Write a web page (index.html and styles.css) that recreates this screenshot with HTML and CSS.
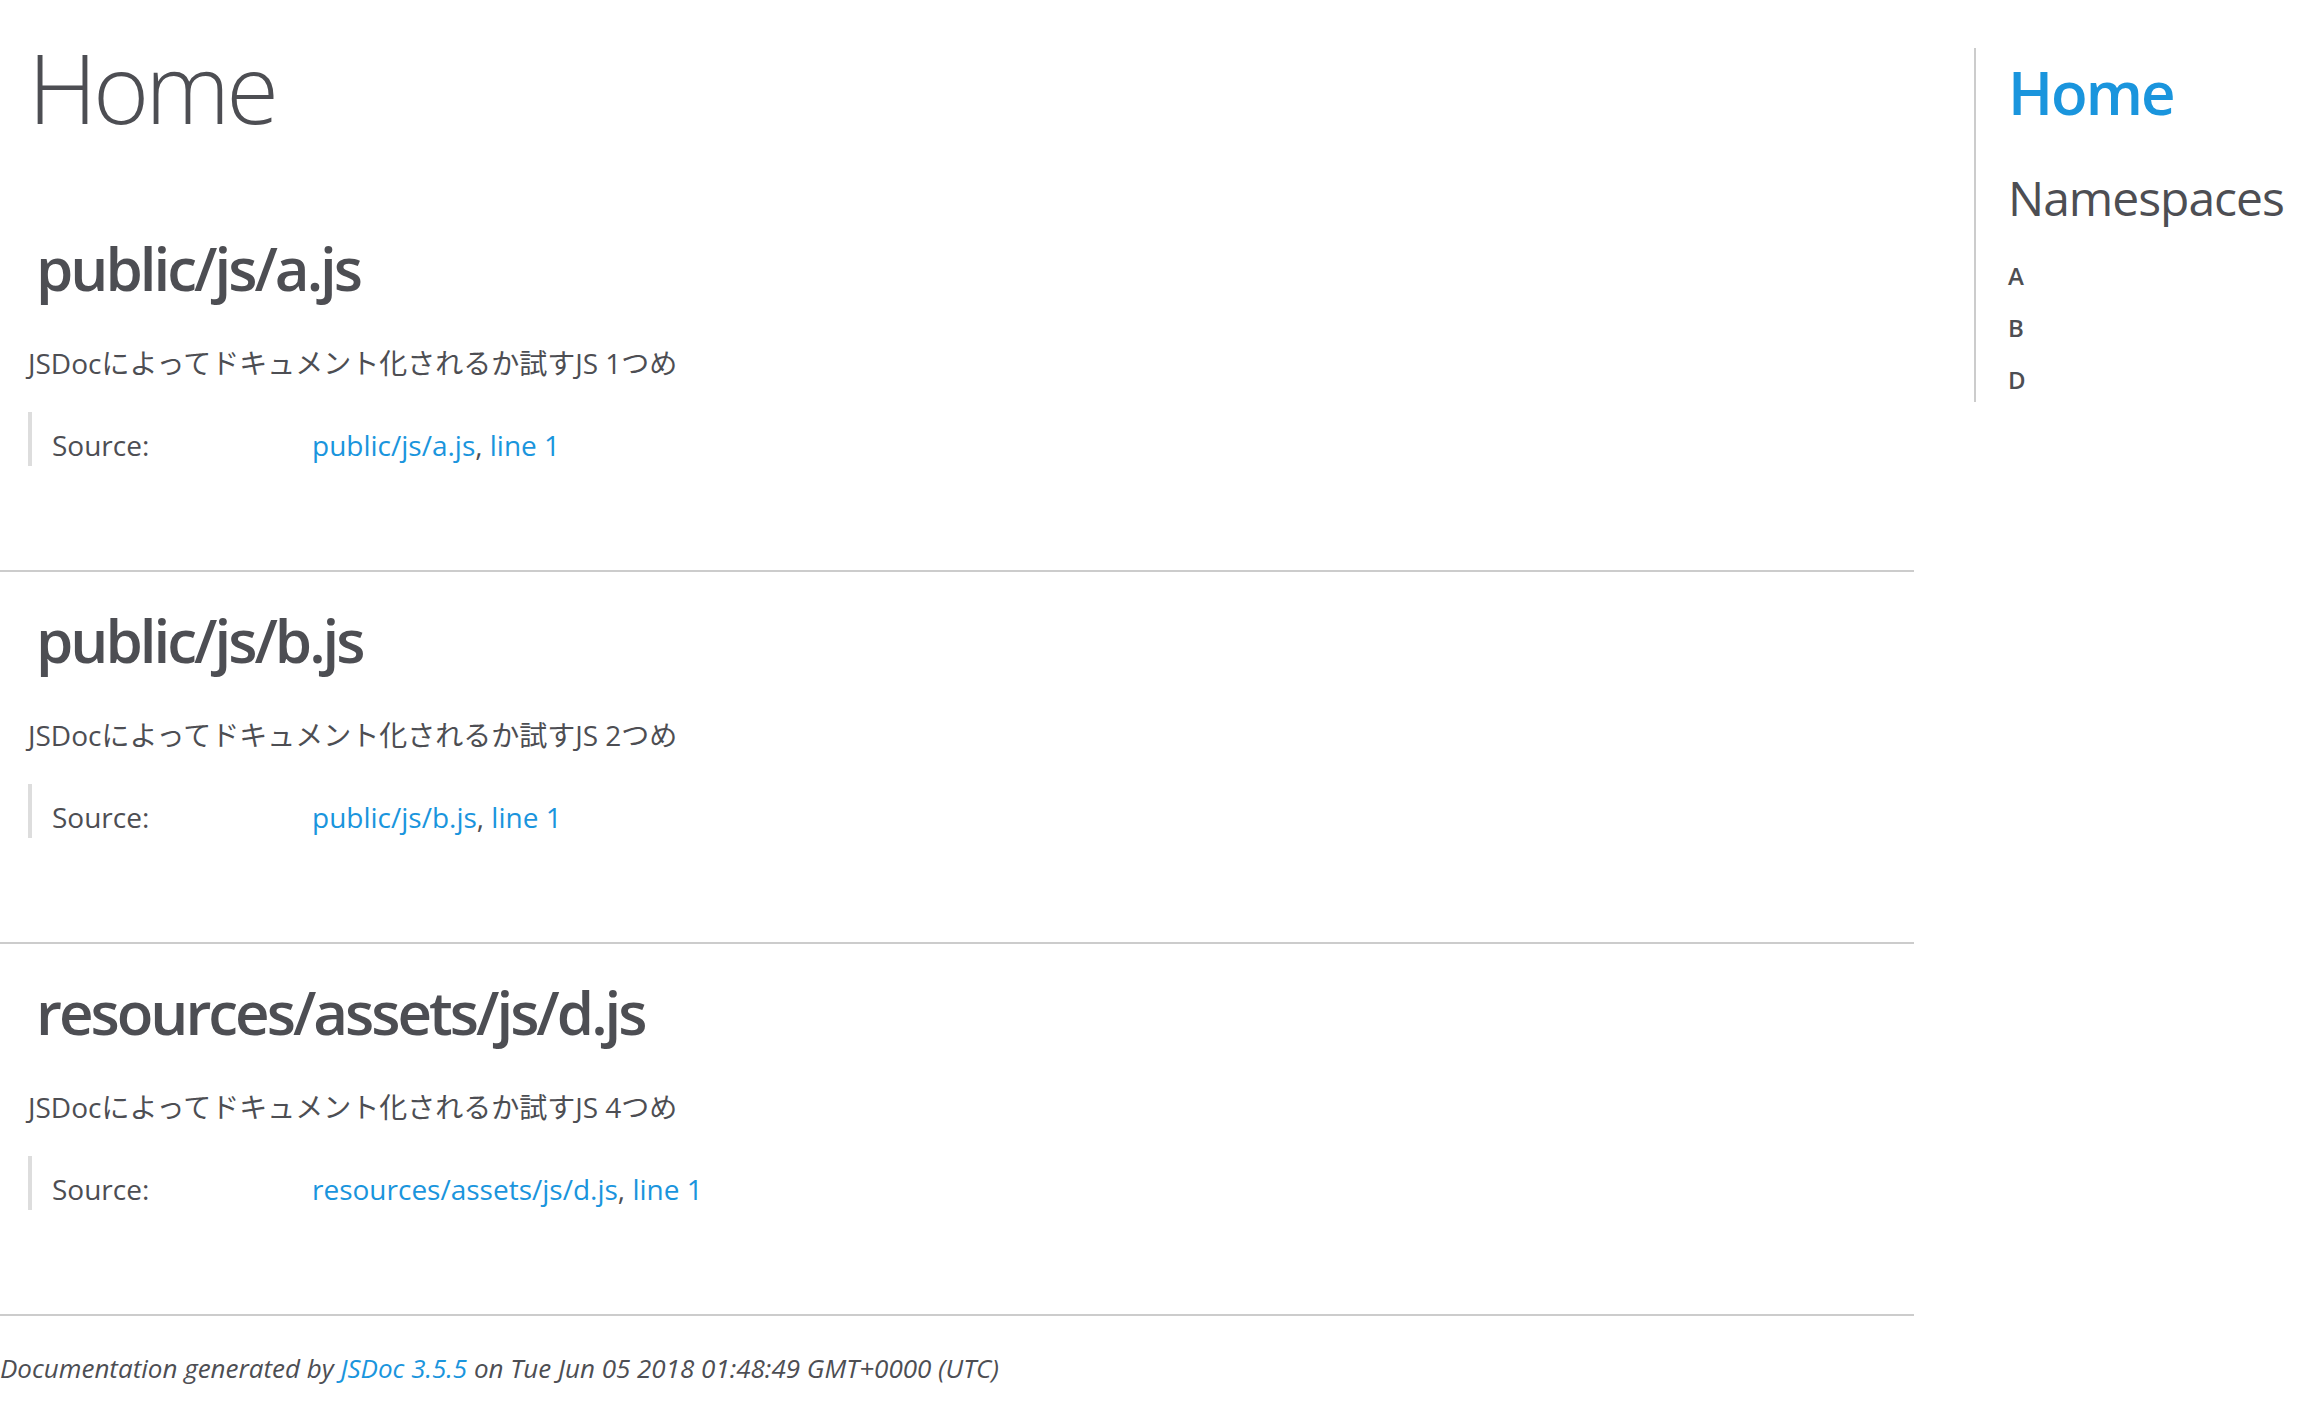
FILE: index.html
```html
<!DOCTYPE html>
<html lang="ja">
<head>
<meta charset="utf-8">
<title>JSDoc: Home</title>
<link rel="stylesheet" href="styles.css">
</head>
<body>
<div class="layout">
<main class="main">
<h1 class="page-title">Home</h1>
<section class="entry">
<h2 class="entry-title">public/js/a.js</h2>
<p class="description">JSDocによってドキュメント化されるか試すJS 1つめ</p>
<dl class="details"><dt>Source:</dt><dd><a href="#a">public/js/a.js</a>, <a href="#a1">line 1</a></dd></dl>
</section>
<section class="entry">
<h2 class="entry-title">public/js/b.js</h2>
<p class="description">JSDocによってドキュメント化されるか試すJS 2つめ</p>
<dl class="details"><dt>Source:</dt><dd><a href="#b">public/js/b.js</a>, <a href="#b1">line 1</a></dd></dl>
</section>
<section class="entry">
<h2 class="entry-title">resources/assets/js/d.js</h2>
<p class="description">JSDocによってドキュメント化されるか試すJS 4つめ</p>
<dl class="details"><dt>Source:</dt><dd><a href="#d">resources/assets/js/d.js</a>, <a href="#d1">line 1</a></dd></dl>
</section>
</main>
<nav class="nav">
<h2 class="nav-home"><a href="#home">Home</a></h2>
<h3 class="nav-heading">Namespaces</h3>
<ul class="nav-list"><li><a href="#A">A</a></li><li><a href="#B">B</a></li><li><a href="#D">D</a></li></ul>
</nav>
</div>
<footer class="footer">Documentation generated by <a href="#jsdoc">JSDoc 3.5.5</a> on Tue Jun 05 2018 01:48:49 GMT+0000 (UTC)</footer>
</body>
</html>
```

FILE: styles.css
```css
* { box-sizing: border-box; }
body {
  margin: 0;
  background: #fff;
  color: #4d4e53;
  font: 28px/40px "Open Sans", "Noto Sans CJK JP", sans-serif;
}
a { color: #1a95dd; text-decoration: none; }
h1, h2, h3, p, dl, dd, ul { margin: 0; padding: 0; }
.layout { display: flex; align-items: flex-start; }
.main { flex: 1; min-width: 0; }
.page-title {
  padding: 21px 28px 0;
  font-size: 96px;
  line-height: 132px;
  font-weight: 300;
  letter-spacing: -4px;
}
.page-title + .entry { padding-top: 73px; }
.entry { padding: 26px 28px 104px; border-bottom: 2px solid #ccc; }
.entry-title {
  padding-left: 8px;
  font-size: 60px;
  line-height: 84px;
  font-weight: 600;
  letter-spacing: -3px;
}
.description { margin-top: 33px; }
.details {
  display: flex;
  margin-top: 29px;
  padding: 13px 0 1px 20px;
  border-left: 4px solid #ddd;
}
.details dt { width: 260px; }
.nav {
  width: 338px;
  margin: 48px 0 0 60px;
  padding: 0 0 4px 32px;
  border-left: 2px solid #ccc;
}
.nav-home { padding-top: 2px; font-size: 60px; line-height: 84px; font-weight: 600; letter-spacing: -2px; }
.nav-heading { margin-top: 30px; font-size: 48px; line-height: 68px; font-weight: 400; letter-spacing: -1px; }
.nav-list { display: grid; gap: 16px; margin-top: 26px; list-style: none; font-size: 24px; line-height: 36px; }
.nav-list a { color: #4d4e53; font-weight: 600; }
.footer { padding: 32px 0 40px; font-size: 26px; line-height: 40px; font-style: italic; }
```
